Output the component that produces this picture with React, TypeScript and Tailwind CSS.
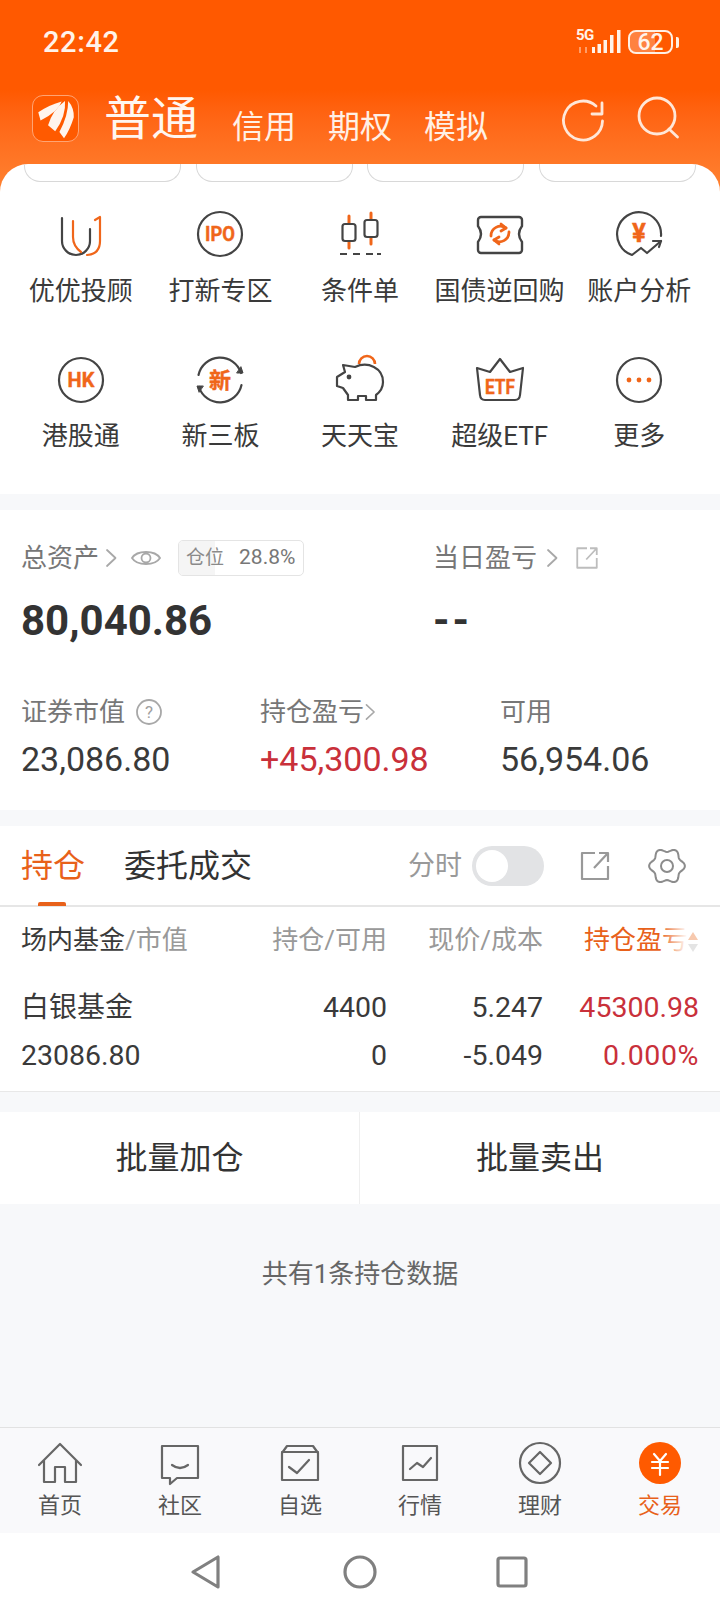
import React from "react";

const D = "#444444";
const O = "#f0661a";

function Ico({ children }: { children: React.ReactNode }) {
  return (
    <svg width="60" height="60" viewBox="0 0 60 60" fill="none" strokeLinecap="round" strokeLinejoin="round">
      {children}
    </svg>
  );
}

const T = ({ x, y, s, children, w }: { x: number; y: number; s: number; children: React.ReactNode; w?: number }) => (
  <text x={x} y={y} fontSize={s} fontWeight={700} fill={O} stroke={O} strokeWidth={0.4} textAnchor="middle" fontFamily="Roboto, 'Noto Sans CJK SC', sans-serif" textLength={w} lengthAdjust={w ? "spacingAndGlyphs" : undefined}>
    {children}
  </text>
);

const IconU = () => (
  <Ico>
    <path d="M11 13V36a14 14 0 0 0 28 0V24" stroke={D} strokeWidth="2.2" />
    <path d="M22 16V32q0 9 8 15" stroke={O} strokeWidth="2.2" />
    <path d="M44 15L49 12V36q0 13-13 14" stroke={O} strokeWidth="2.2" />
  </Ico>
);
const IconIPO = () => (
  <Ico>
    <circle cx="30" cy="29" r="22" stroke={D} strokeWidth="2.2" />
    <T x={30} y={36} s={20} w={30}>IPO</T>
  </Ico>
);
const IconCandle = () => (
  <Ico>
    <path d="M19 11V43M41 8V39" stroke={O} strokeWidth="3" />
    <rect x="12.5" y="19" width="13" height="17" rx="2.5" fill="#fff" stroke={D} strokeWidth="2.2" />
    <rect x="34.5" y="15" width="13" height="17" rx="2.5" fill="#fff" stroke={D} strokeWidth="2.2" />
    <path d="M10 49h7M23 49h7M36 49h7M47 49h4" stroke={D} strokeWidth="2" strokeLinecap="butt" />
  </Ico>
);
const IconTicket = () => (
  <Ico>
    <path d="M11 12H49a3 3 0 0 1 3 3V21q-6 8 0 16V45a3 3 0 0 1-3 3H11a3 3 0 0 1-3-3V37q6-8 0-16V15a3 3 0 0 1 3-3Z" stroke={D} strokeWidth="2.4" />
    <path d="M21 31a9.5 9.5 0 0 1 15-8M39 27a9.5 9.5 0 0 1-15 8" stroke={O} strokeWidth="2.8" />
    <path d="M31 19l5 4-5 3M29 32l-5 3 5 4" stroke={O} strokeWidth="2.8" />
  </Ico>
);
const IconAccount = () => (
  <Ico>
    <path d="M52 31A22 22 0 1 0 23 50L32 43L38 48L52 36" stroke={D} strokeWidth="2.2" />
    <path d="M44 36H52L50 42" stroke={D} strokeWidth="2.2" />
    <T x={30} y={37} s={26}>¥</T>
  </Ico>
);
const IconHK = () => (
  <Ico>
    <circle cx="30" cy="30" r="22" stroke={D} strokeWidth="2.2" />
    <T x={30} y={37} s={20}>HK</T>
  </Ico>
);
const IconNew = () => (
  <Ico>
    <path d="M8.5 25A22 22 0 0 1 51 23" stroke={D} strokeWidth="2.2" />
    <path d="M51.5 35A22 22 0 0 1 9 37" stroke={D} strokeWidth="2.2" />
    <path d="M47 23h6l-2-6zM13 36H7l2 6z" fill={D} stroke={D} strokeWidth="1" />
    <T x={30} y={38} s={22}>新</T>
  </Ico>
);
const IconPig = () => (
  <Ico>
    <path d="M13 15L25 17C38 11 53 18 53 32C53 38 50 42 46 45V50H36V46H28V50H18V45L13 38L7 36V27L15 22Z" stroke={D} strokeWidth="2.2" />
    <circle cx="19" cy="27" r="2.4" fill={D} />
    <path d="M29 14a8 8 0 0 1 16 0" stroke={O} strokeWidth="2.6" strokeLinecap="butt" />
  </Ico>
);
const IconEtf = () => (
  <Ico>
    <path d="M7 18L20 22L30 9L40 22L53 18L50 45q-.5 5-5 5H15q-4.500 0-5-5Z" stroke={D} strokeWidth="2.2" />
    <T x={30} y={44} s={20} w={30}>ETF</T>
  </Ico>
);
const IconMore = () => (
  <Ico>
    <circle cx="30" cy="30" r="22" stroke={D} strokeWidth="2.2" />
    <circle cx="20" cy="30" r="2.4" fill={O} />
    <circle cx="30" cy="30" r="2.4" fill={O} />
    <circle cx="40" cy="30" r="2.4" fill={O} />
  </Ico>
);

const row1: [string, React.ReactNode][] = [
  ["优优投顾", <IconU />],
  ["打新专区", <IconIPO />],
  ["条件单", <IconCandle />],
  ["国债逆回购", <IconTicket />],
  ["账户分析", <IconAccount />],
];
const row2: [string, React.ReactNode][] = [
  ["港股通", <IconHK />],
  ["新三板", <IconNew />],
  ["天天宝", <IconPig />],
  ["超级ETF", <IconEtf />],
  ["更多", <IconMore />],
];

const Chevron = ({ c = "#a8a8a8" }: { c?: string }) => (
  <svg width="13" height="22" viewBox="0 0 13 22" fill="none">
    <path d="M2 3l8.500 8L2 19" stroke={c} strokeWidth="1.800" strokeLinecap="round" strokeLinejoin="round" />
  </svg>
);

const Share = ({ size, c, sw }: { size: number; c: string; sw: number }) => (
  <svg width={size} height={size} viewBox="0 0 32 32" fill="none">
    <path d="M16 3H3V29H29V16" stroke={c} strokeWidth={sw} strokeLinejoin="round" />
    <path d="M15 18L29 3M20 3H29V12" stroke={c} strokeWidth={sw} strokeLinejoin="round" />
  </svg>
);

const gearPath = (() => {
  const pts: string[] = [];
  for (let i = 0; i < 72; i++) {
    const t = (i / 72) * Math.PI * 2;
    const r = 16 + 1.9 * Math.cos(6 * t);
    pts.push(`${(19 + r * Math.cos(t)).toFixed(2)} ${(19 + r * Math.sin(t)).toFixed(2)}`);
  }
  return `M${pts.join("L")}Z`;
})();

function Nav({ label, active, children }: { label: string; active?: boolean; children: React.ReactNode }) {
  return (
    <div className="flex flex-col items-center">
      <svg width="48" height="48" viewBox="0 0 48 48" fill="none" stroke="#666666" strokeWidth="2.200" strokeLinejoin="round" strokeLinecap="round">
        {children}
      </svg>
      <span className={`text-[22px] leading-[28px] mt-[5px] ${active ? "text-[#e8611a]" : "text-[#555555]"}`}>{label}</span>
    </div>
  );
}

export default function App() {
  return (
    <div className="w-[720px] h-[1610px] flex flex-col bg-[#f7f8fa] overflow-hidden [font-family:Roboto,'Noto_Sans_CJK_SC',sans-serif] text-[#333333]">
      {/* Header */}
      <div className="h-[200px] shrink-0 bg-gradient-to-b from-[#ff5900] from-[45%] to-[#ff8533]">
        <div className="h-[84px] pl-[43px] pr-[41px] flex items-center justify-between text-[#fff3ea]">
          <span className="text-[29px] font-medium tracking-[0.6px] mt-[2px]">22:42</span>
          <div className="flex items-center">
            <div className="relative w-[50px] h-[24px]">
              <span className="absolute left-[-2px] top-[-3px] text-[15px] font-bold leading-[16px] tracking-[-0.5px]">5G</span>
              <svg width="50" height="24" viewBox="0 0 50 24" fill="none" className="absolute left-0 top-0">
                <path d="M2 17v6M8 17v6" stroke="#ffb48a" strokeWidth="1.500" />
                <rect x="14" y="17" width="3" height="6" fill="#fff3ea" />
                <rect x="19.500" y="14" width="3.500" height="9" fill="#fff3ea" />
                <rect x="25.500" y="10" width="3.500" height="13" fill="#fff3ea" />
                <rect x="32" y="5" width="3.500" height="18" fill="#fff3ea" />
                <rect x="39" y="0" width="3.500" height="23" fill="#fff3ea" />
              </svg>
            </div>
            <div className="relative w-[45px] h-[24px] rounded-[8px] border-2 border-[#fff0e4] flex items-center justify-center overflow-hidden">
              <div className="absolute left-0 top-0 bottom-0 w-[62%] bg-white/25" />
              <span className="relative text-[23px] font-medium leading-none">62</span>
            </div>
            <div className="w-[3px] h-[11px] rounded-r-[2px] bg-[#fff0e4] ml-[3px]" />
          </div>
        </div>
        <div className="h-[66px] pl-[32px] pr-[36px] flex items-center">
          <div className="w-[47px] h-[47px] rounded-[11px] bg-[#ff5a00] border border-[#ffa473] shrink-0 mt-[2px]">
            <svg width="45" height="45" viewBox="0 0 46 46" fill="#fff5ee">
              <path d="M5.400 16.700Q17 9 29.300 5.700Q26 16 7.700 25Z" />
              <path d="M15.400 30Q20 14 32.700 5Q34 20 22.700 36Z" />
              <path d="M27 36.700Q36 20 36 5Q42 12 41.700 21.700Q38 34 31.700 43.300Z" />
            </svg>
          </div>
          <span className="text-[47px] leading-[56px] text-[#fff6f0] ml-[25px] mt-[4px]">普通</span>
          <div className="flex gap-[32px] ml-[34px] text-[32px] leading-[40px] text-[#fff0e6] mt-[20px]">
            <span>信用</span>
            <span>期权</span>
            <span>模拟</span>
          </div>
          <div className="ml-auto flex items-center gap-[26px] mt-[6px]">
            <svg width="50" height="50" viewBox="0 0 50 50" fill="none" stroke="#ffe7d8" strokeWidth="2.800" strokeLinecap="round" strokeLinejoin="round">
              <path d="M38 11A19.500 19.500 0 1 0 44.500 26" />
              <path d="M44 8V19H34" />
            </svg>
            <svg width="50" height="50" viewBox="0 0 50 50" fill="none" stroke="#ffe7d8" strokeWidth="2.800" strokeLinecap="round" className="-mt-[4px]">
              <circle cx="23" cy="23" r="18" />
              <path d="M35 36L43.500 44" />
            </svg>
          </div>
        </div>
      </div>

      {/* Shortcut panel */}
      <div className="-mt-[36px] bg-white rounded-t-[28px] h-[330px] shrink-0 overflow-hidden">
        <div className="flex justify-between px-[24px] h-[18px]">
          <div className="w-[157px] h-[18px] rounded-b-[16px] border border-t-0 border-[#d8d8d8]" />
          <div className="w-[157px] h-[18px] rounded-b-[16px] border border-t-0 border-[#d8d8d8]" />
          <div className="w-[157px] h-[18px] rounded-b-[16px] border border-t-0 border-[#d8d8d8]" />
          <div className="w-[157px] h-[18px] rounded-b-[16px] border border-t-0 border-[#d8d8d8]" />
        </div>
        <div className="px-[11px] pt-[23px] flex flex-col gap-[43px]">
          {[row1, row2].map((row, i) => (
            <div key={i} className="grid grid-cols-5">
              {row.map(([label, icon]) => (
                <div key={label} className="flex flex-col items-center">
                  {icon}
                  <span className="text-[26px] leading-[32px] text-[#3a3a3a] mt-[10px] whitespace-nowrap">{label}</span>
                </div>
              ))}
            </div>
          ))}
        </div>
      </div>

      {/* Assets */}
      <div className="mt-[16px] bg-white h-[300px] shrink-0 px-[21px] pt-[30px]">
        <div className="flex">
          <div className="w-[413px]">
            <div className="flex items-center h-[36px] text-[26px] text-[#777777]">
              <span>总资产</span>
              <span className="ml-[6px]"><Chevron /></span>
              <svg width="32" height="24" viewBox="0 0 32 24" fill="none" className="ml-[12px]">
                <path d="M2 12C7 4 25 4 30 12C25 20 7 20 2 12Z" stroke="#a8a8a8" strokeWidth="1.800" />
                <circle cx="16" cy="12" r="4.500" stroke="#a8a8a8" strokeWidth="1.800" />
              </svg>
              <div className="relative ml-[16px] w-[126px] h-[36px] rounded-[5px] border border-[#e4e4e4] flex items-center overflow-hidden">
                <div className="absolute left-0 top-0 bottom-0 w-[36px] bg-[#f5f5f5]" />
                <span className="relative text-[19px] text-[#8a8a8a] ml-[7px]">仓位</span>
                <span className="relative text-[21px] text-[#777777] ml-[15px]">28.8%</span>
              </div>
            </div>
            <div className="text-[42px] font-bold leading-[50px] mt-[20px]">80,040.86</div>
          </div>
          <div className="-ml-[1px]">
            <div className="flex items-center h-[36px] text-[26px] text-[#777777]">
              <span>当日盈亏</span>
              <span className="ml-[9px]"><Chevron /></span>
              <span className="ml-[16px]"><Share size={24} c="#bdbdbd" sw={2.400} /></span>
            </div>
            <div className="text-[42px] font-bold leading-[50px] mt-[20px] tracking-[3px]">--</div>
          </div>
        </div>
        <div className="grid grid-cols-[239px_240px_1fr] mt-[49px]">
          <div>
            <div className="flex items-center h-[34px] text-[26px] text-[#777777]">
              <span>证券市值</span>
              <svg width="28" height="28" viewBox="0 0 28 28" fill="none" className="ml-[10px]">
                <circle cx="14" cy="14" r="12" stroke="#a8a8a8" strokeWidth="1.800" />
                <text x="14" y="20" fontSize="17" fill="#a0a0a0" textAnchor="middle" fontFamily="Roboto, sans-serif">?</text>
              </svg>
            </div>
            <div className="text-[34px] leading-[44px] mt-[8px] text-[#3a3a3a]">23,086.80</div>
          </div>
          <div>
            <div className="flex items-center h-[34px] text-[26px] text-[#777777]">
              <span>持仓盈亏</span>
              <span className="scale-90"><Chevron /></span>
            </div>
            <div className="text-[34px] leading-[44px] mt-[8px] text-[#c9303a]">+45,300.98</div>
          </div>
          <div>
            <div className="flex items-center h-[34px] text-[26px] text-[#777777]">可用</div>
            <div className="text-[34px] leading-[44px] mt-[8px] text-[#3a3a3a]">56,954.06</div>
          </div>
        </div>
      </div>

      {/* Holdings */}
      <div className="mt-[16px] bg-white shrink-0 h-[266px] border-b border-[#e8e8e8]">
        <div className="h-[81px] border-b-2 border-[#e6e6e6] pl-[21px] pr-[34px] flex items-center">
          <div className="relative">
            <span className="text-[32px] leading-[80px] text-[#e8611a] block">持仓</span>
            <div className="absolute left-[17px] bottom-0 w-[28px] h-[4px] rounded-t-[2px] bg-[#e8611a]" />
          </div>
          <span className="text-[32px] text-[#333333] ml-[39px]">委托成交</span>
          <span className="ml-auto text-[27px] text-[#999999] mt-[2px]">分时</span>
          <div className="ml-[10px] w-[72px] h-[40px] rounded-full bg-[#e2e3e5] flex items-center pl-[4px]">
            <div className="w-[32px] h-[32px] rounded-full bg-white" />
          </div>
          <span className="ml-[35px]"><Share size={32} c="#999999" sw={2.200} /></span>
          <svg width="38" height="38" viewBox="0 0 38 38" fill="none" className="ml-[37px]" stroke="#8c8c8c" strokeWidth="2" strokeLinejoin="round">
            <path d={gearPath} />
            <circle cx="19" cy="19" r="6" />
          </svg>
        </div>
        <div className="pl-[21px] pr-[21px]">
          <div className="grid grid-cols-[1fr_142px_156px_156px] h-[66px] items-center text-[26px] text-right text-[#999999]">
            <div className="text-left whitespace-nowrap"><span className="text-[#3a3a3a]">场内基金</span>/市值</div>
            <div className="whitespace-nowrap">持仓/可用</div>
            <div className="whitespace-nowrap">现价/成本</div>
            <div className="relative text-[#e8611a] text-left pl-[41px] whitespace-nowrap">
              持仓盈亏
              <div className="absolute right-[0px] top-[6px] bottom-[6px] w-[39px] bg-gradient-to-r from-white/0 to-white to-[70%]" />
              <svg width="12" height="24" viewBox="0 0 12 24" className="absolute right-0 top-[9px]">
                <path d="M6 2L11 10H1Z" fill="#f7c9ae" />
                <path d="M6 22L11 14H1Z" fill="#e4e4e4" />
              </svg>
            </div>
          </div>
          <div className="grid grid-cols-[1fr_142px_156px_156px] text-[28.5px] text-right text-[#3a3a3a] mt-[11px] leading-[48px]">
            <div className="text-left text-[28px]">白银基金</div>
            <div>4400</div>
            <div>5.247</div>
            <div className="text-[#c9303a]">45300.98</div>
            <div className="text-left">23086.80</div>
            <div>0</div>
            <div>-5.049</div>
            <div className="text-[#c9303a] tracking-[0.6px]">0.000%</div>
          </div>
        </div>
      </div>

      {/* Batch actions */}
      <div className="mt-[20px] bg-white h-[92px] shrink-0 grid grid-cols-2 text-[32px] text-[#333333]">
        <div className="flex items-center justify-center border-r border-[#efefef]">批量加仓</div>
        <div className="flex items-center justify-center">批量卖出</div>
      </div>

      <div className="flex-1 text-center text-[26px] text-[#666666] pt-[51px]">共有1条持仓数据</div>

      {/* Bottom nav */}
      <div className="h-[106px] shrink-0 bg-[#f9f9fb] border-t border-[#e2e2e2] grid grid-cols-6 pt-[11px]">
        <Nav label="首页">
          <path d="M3 26L24 5L45 26M8 21V43H19V28H29V43H40V21" />
        </Nav>
        <Nav label="社区">
          <path d="M6 7H42V39H21L14 45V39H6Z" />
          <path d="M16 26q8 6 16 0" />
        </Nav>
        <Nav label="自选">
          <path d="M6 14L11 7H37L42 14V41H6Z" />
          <path d="M6 13H42" />
          <path d="M13 28L21 34L33 21" />
        </Nav>
        <Nav label="行情">
          <rect x="7" y="7" width="34" height="34" />
          <path d="M14 30L21 24L27 28L35 19" />
        </Nav>
        <Nav label="理财">
          <circle cx="24" cy="24" r="20" />
          <path d="M24 13L35 24L24 35L13 24Z" />
        </Nav>
        <Nav label="交易" active>
          <circle cx="24" cy="24" r="21" fill="#ff5a00" stroke="none" />
          <path d="M18 15L24 22L30 15M16 23H32M16 29H32M24 22V36" stroke="#ffffff" />
        </Nav>
      </div>

      {/* System nav */}
      <div className="h-[77px] shrink-0 bg-white flex items-center pl-[190px] gap-[123px]">
        <svg width="30" height="36" viewBox="0 0 30 36" fill="none" stroke="#808080" strokeWidth="3.200" strokeLinejoin="round">
          <path d="M28 3V33L3 18Z" />
        </svg>
        <svg width="34" height="34" viewBox="0 0 34 34" fill="none" stroke="#808080" strokeWidth="3.200">
          <circle cx="17" cy="17" r="15" />
        </svg>
        <svg width="32" height="32" viewBox="0 0 32 32" fill="none" stroke="#808080" strokeWidth="3.200" strokeLinejoin="round" className="-ml-[4px]">
          <rect x="2" y="2" width="28" height="28" rx="2" />
        </svg>
      </div>
    </div>
  );
}
